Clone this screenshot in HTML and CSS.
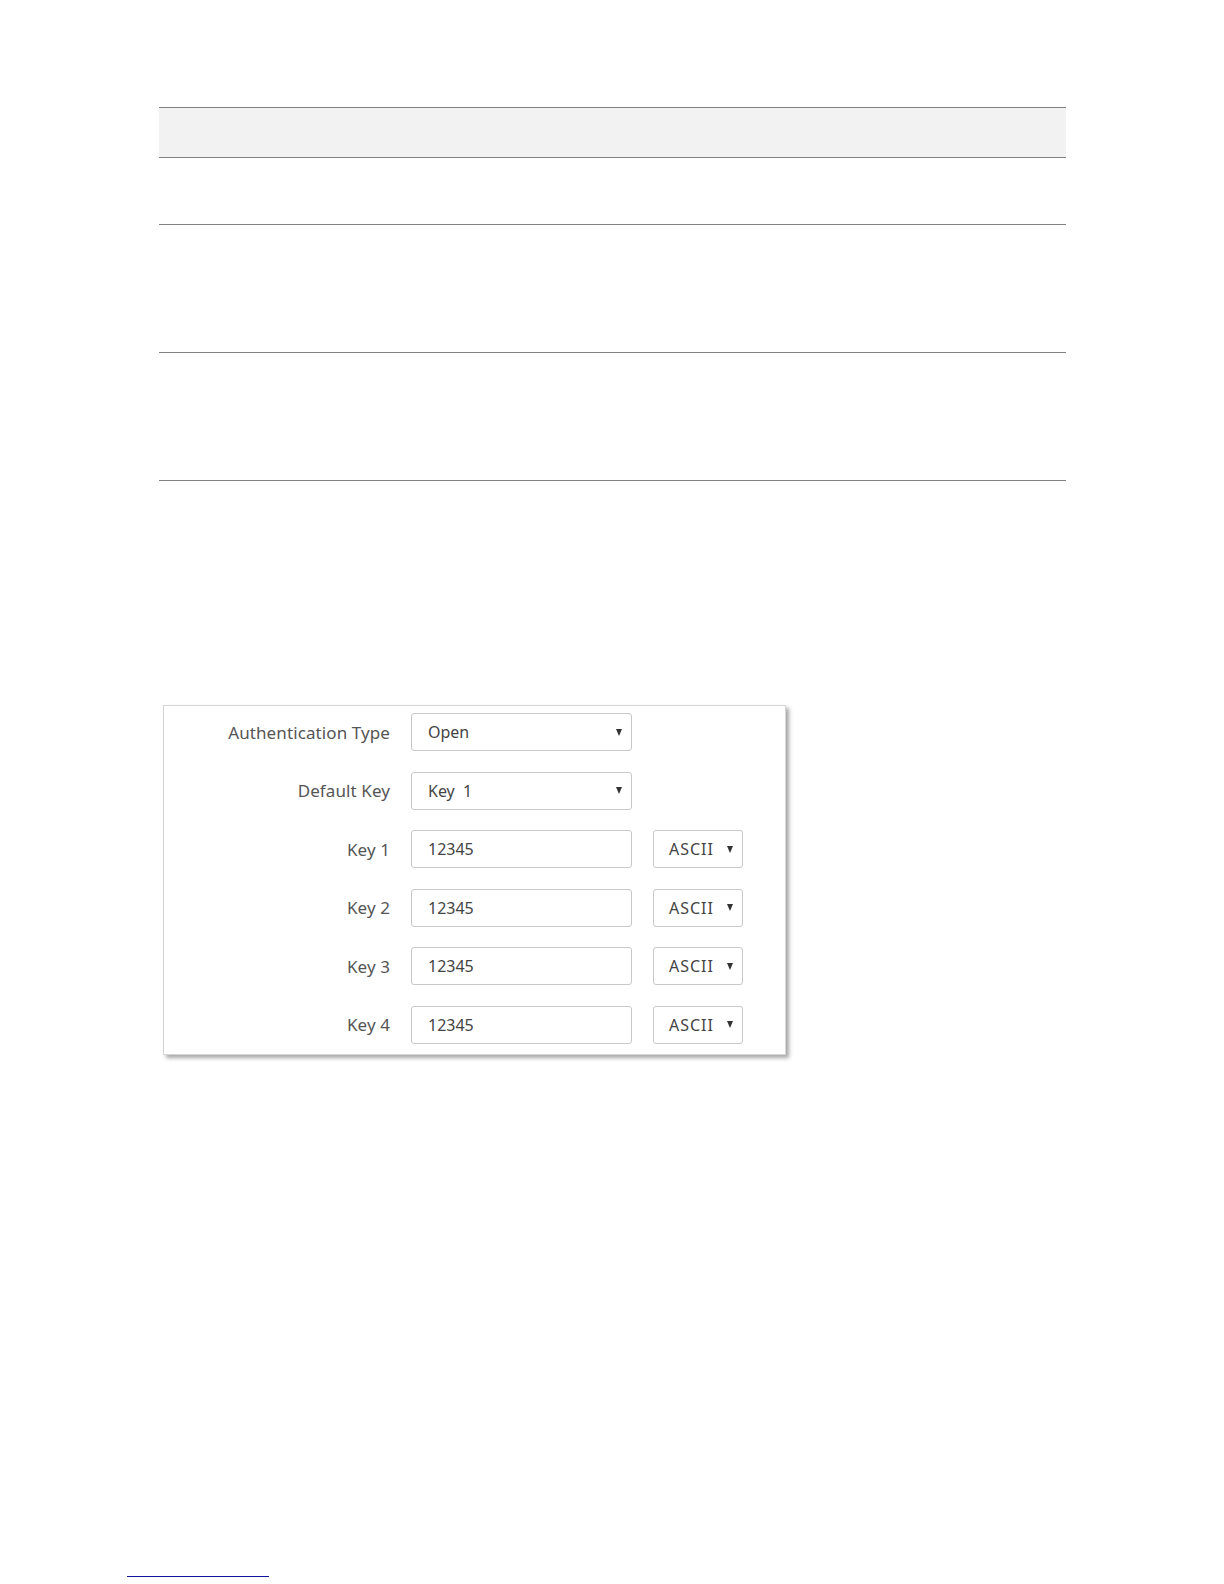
FILE: index.html
```html
<!DOCTYPE html>
<html lang="en">
<head>
  <meta charset="UTF-8">
  <title>WEP Settings</title>
  <link rel="stylesheet" href="styles.css">
</head>
<body>
  <div class="page">
    <table class="grid">
      <tr class="head"><td></td></tr>
      <tr class="short"><td></td></tr>
      <tr class="tall"><td></td></tr>
      <tr class="tall"><td></td></tr>
    </table>

    <div class="panel">
      <div class="row">
        <label>Authentication Type</label>
        <div class="select wide"><span>Open</span><i class="caret"></i></div>
      </div>
      <div class="row">
        <label>Default Key</label>
        <div class="select wide"><span>Key&nbsp; 1</span><i class="caret"></i></div>
      </div>
      <div class="row">
        <label>Key 1</label>
        <input class="field" type="text" value="12345">
        <div class="select small"><span>ASCII</span><i class="caret"></i></div>
      </div>
      <div class="row">
        <label>Key 2</label>
        <input class="field" type="text" value="12345">
        <div class="select small"><span>ASCII</span><i class="caret"></i></div>
      </div>
      <div class="row">
        <label>Key 3</label>
        <input class="field" type="text" value="12345">
        <div class="select small"><span>ASCII</span><i class="caret"></i></div>
      </div>
      <div class="row">
        <label>Key 4</label>
        <input class="field" type="text" value="12345">
        <div class="select small"><span>ASCII</span><i class="caret"></i></div>
      </div>
    </div>

    <div class="footnote"></div>
  </div>
</body>
</html>
```

FILE: styles.css
```css
body {
  margin: 0;
  background: #fff;
  font-family: "Noto Sans", "Open Sans", Arial, sans-serif;
}
.page {
  height: 1584px;
  padding-top: 107px;
  box-sizing: border-box;
}
.grid {
  margin-left: 159px;
  width: 907px;
  border-collapse: collapse;
}
.grid td {
  padding: 0;
  border-top: 1px solid #808080;
  border-bottom: 1px solid #808080;
}
.grid .head td {
  height: 49px;
  background: #f2f2f2;
}
.grid .short td {
  height: 66px;
}
.grid .tall td {
  height: 127px;
}
.panel {
  margin: 224px 0 0 163px;
  width: 623px;
  height: 350px;
  box-sizing: border-box;
  padding-top: 7px;
  border: 1px solid #d6d6d6;
  background: #fff;
  box-shadow: 3px 3px 4px rgba(0,0,0,0.35);
  display: flex;
  flex-direction: column;
  gap: 20.6px;
}
.row {
  display: flex;
  align-items: center;
  height: 38px;
}
.row label {
  width: 226px;
  margin-right: 21px;
  text-align: right;
  font-size: 17px;
  letter-spacing: 0.1px;
  color: #555;
}
.field, .select {
  height: 38px;
  box-sizing: border-box;
  border: 1px solid #c8c8c8;
  border-radius: 3px;
  background: #fff;
  font-family: inherit;
  font-size: 16px;
  color: #444;
}
.field {
  width: 221px;
  padding: 0 16px;
  outline: none;
}
.select {
  display: flex;
  align-items: center;
  justify-content: space-between;
  padding: 0 9px 0 16px;
}
.select.wide {
  width: 221px;
}
.select.small {
  width: 90px;
  margin-left: 21px;
  padding-left: 15px;
}
.select.small span {
  letter-spacing: 1px;
}
.caret {
  width: 0;
  height: 0;
  border-left: 3.5px solid transparent;
  border-right: 3.5px solid transparent;
  border-top: 7px solid #333;
}
.footnote {
  margin: 521px 0 0 127px;
  width: 142px;
  border-top: 1px solid #1414a0;
}
```
